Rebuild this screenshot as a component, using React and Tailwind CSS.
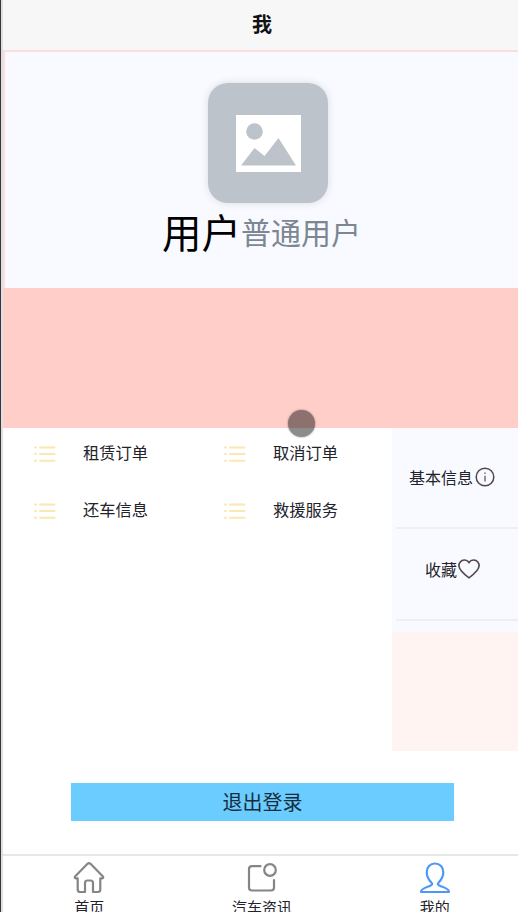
import React from 'react';

const orders = ['租赁订单', '取消订单', '还车信息', '救援服务'];

const ListIcon = () => (
  <svg className="block shrink-0" width="22" height="18" viewBox="0 0 22 18" fill="none" stroke="#fae8b0" strokeWidth="2">
    <path d="M1 2.5h1M6 2.5h14.5M1 9h1M6 9h14.5M1 15.7h1M6 15.7h14.5" strokeLinecap="round" />
  </svg>
);

const PictureIcon = () => (
  <svg className="block" width="65" height="57" viewBox="0 0 65 57">
    <path d="M0 0h65v57H0z" fill="#fff" />
    <circle cx="18.5" cy="16.5" r="8.3" fill="#bcc3cb" />
    <path d="M5 50.5 18.5 33l10 8L42.5 23 60 50.5z" fill="#bcc3cb" />
  </svg>
);

const InfoIcon = () => (
  <svg className="block" width="20" height="20" viewBox="0 0 20 20" fill="none" stroke="#51464c" strokeWidth="1.5">
    <circle cx="10" cy="10" r="8.8" />
    <path d="M10 8.8v5.6" stroke="#766c75" />
    <circle cx="10" cy="6.2" r="0.5" stroke="#766c75" strokeWidth="1" />
  </svg>
);

const HeartIcon = () => (
  <svg className="block" width="22" height="20" viewBox="0 0 22 20" fill="none" stroke="#51464c" strokeWidth="1.6">
    <path d="M11 3.5C8.8.3 4.4.3 2.2 3 .2 5.7 1 9.2 3.2 11.8 5.4 14.4 8.5 17.2 11 18.8c2.5-1.6 5.600-4.400 7.800-7C21 9.200 21.800 5.700 19.800 3 17.600.3 13.200.3 11 3.500z" />
  </svg>
);

const HomeIcon = () => (
  <svg className="block" width="32" height="32" viewBox="0 0 32 32" fill="none" stroke="#858588" strokeWidth="2.2" strokeLinejoin="round">
    <path d="M14.5 1.8Q16 .5 17.5 1.8L29.7 14.2Q31 16 29 16.4H27.3V27.500Q27.3 30 24.8 30H20V21Q20 18.5 17.500 18.5H14.500Q12 18.5 12 21V30H7.200Q4.700 30 4.700 27.500V16.400H3Q1 16 2.300 14.200z" />
  </svg>
);

const NewsIcon = () => (
  <svg className="block" width="32" height="32" viewBox="0 0 32 32" fill="none" stroke="#858588" strokeWidth="2.2" strokeLinecap="round">
    <path d="M14.500 4.200H6Q3 4.200 3 7.200V25.500q0 3 3 3h19q3 0 3-3V18" />
    <circle cx="24" cy="8" r="5.800" />
  </svg>
);

const PersonIcon = () => (
  <svg className="block" width="32" height="32" viewBox="0 0 32 32" fill="none" stroke="#4e98f5" strokeWidth="2.200" strokeLinejoin="round">
    <path d="M16 1.500c-5 0-8.300 3.800-8.300 8.800 0 4.500 2 7.500 4.600 10.200 1.500 1.600.8 2.500-1 3.300C7 25.600 2 26.500 2 30h28c0-3.500-5-4.400-9.300-6.200-1.800-.8-2.500-1.700-1-3.300 2.600-2.700 4.600-5.700 4.600-10.200 0-5-3.300-8.800-8.300-8.800z" />
  </svg>
);

const tabs = [
  { label: '首页', Icon: HomeIcon },
  { label: '汽车资讯', Icon: NewsIcon },
  { label: '我的', Icon: PersonIcon },
];

const Profile = () => (
  <section className="h-[238px] shrink-0 border-t-2 border-l-2 border-[#fbdedd] bg-[#f8faff] pt-[31px]">
    <div className="ml-[203px] flex size-[120px] items-center justify-center rounded-[20px] bg-[#bcc3cb] shadow-[0_0_8px_rgba(0,0,0,0.12)]">
      <PictureIcon />
    </div>
    <div className="ml-[157px] flex items-start whitespace-nowrap leading-[56px]">
      <span className="text-[39.5px] text-black">用户</span>
      <span className="text-[30px] text-[#7c8792]">普通用户</span>
    </div>
  </section>
);

const SidePanel = () => (
  <aside className="w-[126px] shrink-0">
    <div className="h-[204px] bg-[#f8faff] pl-1">
      <div className="flex h-[101px] items-center border-b-2 border-[#eeeff2] pb-[2px] pl-[13px] text-[16px]">
        <span className="mr-[2px]">基本信息</span>
        <InfoIcon />
      </div>
      <div className="flex h-[92px] items-center border-b-2 border-[#eeeff2] pb-[11px] pl-[29px] text-[16px]">
        <span className="mr-px">收藏</span>
        <HeartIcon />
      </div>
    </div>
    <div className="h-[119px] bg-[#fff4f1]"></div>
  </aside>
);

const App = () => {
  return (
    <div className="flex h-[912px] w-[518px] overflow-hidden bg-white font-['Noto_Sans_CJK_SC',sans-serif] text-[#22222a]">
      <div className="w-[3px] shrink-0 border-l border-[#39363a] bg-[#e2dfe1]"></div>
      <main className="flex min-w-0 flex-1 flex-col">
        <header className="flex h-[50px] shrink-0 items-center justify-center bg-[#f7f7f7] pb-[3px] pl-[3px] text-[20px] font-bold text-[#111116]">
          我
        </header>
        <Profile />
        <div className="relative h-[140px] shrink-0 bg-[#ffcec9]">
          <div className="absolute top-[122px] left-[285px] z-10 size-[27px] rounded-full bg-black/45 shadow-[0_0_2px_rgba(0,0,0,0.5)]"></div>
        </div>
        <div className="flex h-[323px] shrink-0">
          <div className="grid flex-1 auto-rows-[57px] grid-cols-[190px_1fr] content-start pl-[31px]">
            {orders.map((label) => (
              <div key={label} className="flex h-[51px] items-center text-[16.3px]">
                <ListIcon />
                <span className="-mt-[3px] ml-[27px]">{label}</span>
              </div>
            ))}
          </div>
          <SidePanel />
        </div>
        <button className="mt-8 ml-[68px] flex h-[38px] w-[383px] shrink-0 items-center justify-center bg-[#6bcdff] text-[20px] text-[#172c3d]">
          退出登录
        </button>
        <nav className="mt-[33px] -mr-[3px] grid h-[58px] shrink-0 grid-cols-3 border-t-2 border-[#e8e7e8] pt-[6px]">
          {tabs.map(({ label, Icon }) => (
            <div key={label} className="flex flex-col items-center">
              <Icon />
              <span className="text-[15px] leading-[26px]">{label}</span>
            </div>
          ))}
        </nav>
      </main>
    </div>
  );
};

export default App;
